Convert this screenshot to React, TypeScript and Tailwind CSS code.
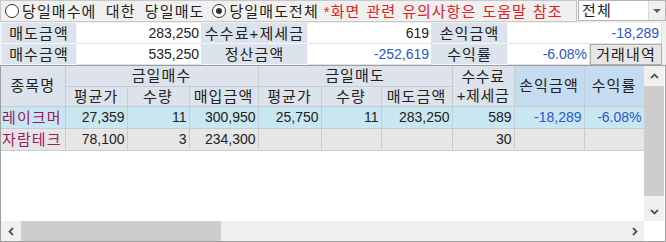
const FONT = "font-['Liberation_Sans','Noto_Sans_CJK_KR',sans-serif]";

type Row = {
  name: string;
  buyAvg: string;
  buyQty: string;
  buyAmt: string;
  sellAvg: string;
  sellQty: string;
  sellAmt: string;
  fee: string;
  pnl: string;
  rate: string;
};

const ROWS: Row[] = [
  {
    name: "레이크머",
    buyAvg: "27,359",
    buyQty: "11",
    buyAmt: "300,950",
    sellAvg: "25,750",
    sellQty: "11",
    sellAmt: "283,250",
    fee: "589",
    pnl: "-18,289",
    rate: "-6.08%",
  },
  {
    name: "자람테크",
    buyAvg: "78,100",
    buyQty: "3",
    buyAmt: "234,300",
    sellAvg: "",
    sellQty: "",
    sellAmt: "",
    fee: "30",
    pnl: "",
    rate: "",
  },
];

// small chevron used by the scrollbar buttons
function Arrow({ dir }: { dir: "up" | "down" | "left" | "right" }) {
  const pts = {
    up: "2,7 5.5,3.5 9,7",
    down: "2,4 5.5,7.5 9,4",
    left: "7,2 3.5,5.5 7,9",
    right: "4,2 7.5,5.5 4,9",
  }[dir];
  return (
    <svg width="11" height="11" viewBox="0 0 11 11">
      <polyline points={pts} fill="none" stroke="#555" strokeWidth="1.8" />
    </svg>
  );
}

function Radio({ checked, label }: { checked?: boolean; label: string }) {
  return (
    <div className="flex items-center gap-[3px] shrink-0">
      <span className="w-[14px] h-[14px] rounded-full border border-[#333] bg-white flex items-center justify-center">
        {checked && <span className="w-[6px] h-[6px] rounded-full bg-[#333]" />}
      </span>
      <span>{label}</span>
    </div>
  );
}

function Label({ children }: { children: React.ReactNode }) {
  return (
    <div className="bg-[#dce3ec] border-r border-b border-[#f4f6f9] flex items-center justify-center whitespace-nowrap">
      {children}
    </div>
  );
}

function Value({ children, blue }: { children: React.ReactNode; blue?: boolean }) {
  return (
    <div
      className={`bg-white border-r border-b border-[#e2e2e2] flex items-center justify-end pr-[2px] text-[14px] tracking-normal ${
        blue ? "text-[#2b55d3]" : "text-[#222]"
      }`}
    >
      {children}
    </div>
  );
}

export default function App() {
  const cell = "border-r border-b border-[#c4ccd4] whitespace-nowrap overflow-hidden";
  const num = `${cell} text-right pr-[2px] text-[14px] tracking-normal`;
  const th = "border-r border-b border-[#c4ccd4] font-normal text-center whitespace-nowrap";

  return (
    <div
      className={`w-[666px] h-[242px] bg-[#f0f0f0] overflow-hidden text-[15px] leading-none tracking-[1.1px] text-[#222] ${FONT}`}
    >
      {/* top option row */}
      <div className="flex h-[22px]">
        <div className="w-[577px] shrink-0 border border-[#c8c8c8] flex items-center pl-[4px] gap-[8px] [word-spacing:4px] whitespace-nowrap overflow-hidden">
          <Radio label="당일매수에 대한 당일매도" />
          <Radio checked label="당일매도전체" />
          <span className="text-[#e12121] ml-[-3px] [word-spacing:1px] tracking-[1px]">
            *화면 관련 유의사항은 도움말 참조
          </span>
        </div>
        <div className="w-[88px] h-[21px] shrink-0 ml-[1px] bg-white border border-[#b4b4b4] flex items-center">
          <span className="flex-1 pl-[3px]">전체</span>
          <span className="w-[17px] h-full bg-[#f0f0f0] border-l border-[#d8d8d8] flex items-center justify-center">
            <span className="w-0 h-0 border-l-[4px] border-r-[4px] border-t-[4px] border-l-transparent border-r-transparent border-t-[#606060]" />
          </span>
        </div>
      </div>

      {/* summary */}
      <div className="ml-[2px] mt-[1px] w-[660px] grid grid-cols-[75px_125px_106px_124px_76px_82px_72px] grid-rows-[21px_21px]">
        <Label>매도금액</Label>
        <Value>283,250</Value>
        <Label>수수료+제세금</Label>
        <Value>619</Value>
        <Label>손익금액</Label>
        <div className="col-span-2 bg-white border-r border-b border-[#e2e2e2] flex items-center justify-end pr-[2px] text-[14px] tracking-normal text-[#2b55d3]">
          -18,289
        </div>
        <Label>매수금액</Label>
        <Value>535,250</Value>
        <Label>정산금액</Label>
        <Value blue>-252,619</Value>
        <Label>수익률</Label>
        <Value blue>-6.08%</Value>
        <button className="bg-[#e6e6e6] border border-[#adadad] flex items-center justify-center whitespace-nowrap">
          거래내역
        </button>
      </div>

      {/* grid */}
      <div className="w-[666px] h-[177px] border border-[#a0a0a0] bg-white flex flex-col">
        <div className="flex h-[155px]">
          <div className="w-[643px] shrink-0 overflow-hidden">
            <table className="border-collapse table-fixed w-[643px]">
              <colgroup>
                <col className="w-[64px]" />
                <col className="w-[62px]" />
                <col className="w-[62px]" />
                <col className="w-[69px]" />
                <col className="w-[63px]" />
                <col className="w-[60px]" />
                <col className="w-[71px]" />
                <col className="w-[62px]" />
                <col className="w-[70px]" />
                <col className="w-[60px]" />
              </colgroup>
              <thead>
                <tr className="h-[20px] bg-[#dce3ec]">
                  <th rowSpan={2} className={th}>종목명</th>
                  <th colSpan={3} className={th}>금일매수</th>
                  <th colSpan={3} className={th}>금일매도</th>
                  <th rowSpan={2} className={`${th} leading-[19px] tracking-[0.6px]`}>
                    수수료
                    <br />
                    +제세금
                  </th>
                  <th rowSpan={2} className={`${th} bg-[#c5dcf0]`}>손익금액</th>
                  <th rowSpan={2} className={`${th} bg-[#c5dcf0]`}>수익률</th>
                </tr>
                <tr className="h-[20px] bg-[#dce3ec]">
                  <th className={th}>평균가</th>
                  <th className={th}>수량</th>
                  <th className={th}>매입금액</th>
                  <th className={th}>평균가</th>
                  <th className={th}>수량</th>
                  <th className={th}>매도금액</th>
                </tr>
              </thead>
              <tbody>
                {ROWS.map((r, i) => (
                  <tr key={r.name} className={`h-[22px] ${i === 0 ? "bg-[#c9e7f1]" : "bg-[#e6e6e6]"}`}>
                    <td className={`${cell} text-left pl-[1px] text-[#9c1763]`}>{r.name}</td>
                    <td className={num}>{r.buyAvg}</td>
                    <td className={num}>{r.buyQty}</td>
                    <td className={num}>{r.buyAmt}</td>
                    <td className={num}>{r.sellAvg}</td>
                    <td className={num}>{r.sellQty}</td>
                    <td className={num}>{r.sellAmt}</td>
                    <td className={num}>{r.fee}</td>
                    <td className={`${num} text-[#2b55d3]`}>{r.pnl}</td>
                    <td className={`${num} text-[#2b55d3]`}>{r.rate}</td>
                  </tr>
                ))}
              </tbody>
            </table>
          </div>
          {/* vertical scrollbar */}
          <div className="w-[20px] shrink-0 bg-[#f0f0f0] flex flex-col">
            <div className="h-[20px] flex items-center justify-center">
              <Arrow dir="up" />
            </div>
            <div className="h-[110px] bg-[#cdcdcd]" />
            <div className="flex-1" />
            <div className="h-[20px] flex items-center justify-center">
              <Arrow dir="down" />
            </div>
          </div>
        </div>
        {/* horizontal scrollbar */}
        <div className="h-[20px] flex">
          <div className="w-[643px] shrink-0 bg-[#f0f0f0] flex items-center">
            <div className="w-[20px] flex items-center justify-center">
              <Arrow dir="left" />
            </div>
            <div className="w-[200px] h-full bg-[#cdcdcd]" />
            <div className="flex-1" />
            <div className="w-[20px] flex items-center justify-center">
              <Arrow dir="right" />
            </div>
          </div>
          <div className="w-[20px] shrink-0 bg-white" />
        </div>
      </div>
    </div>
  );
}
